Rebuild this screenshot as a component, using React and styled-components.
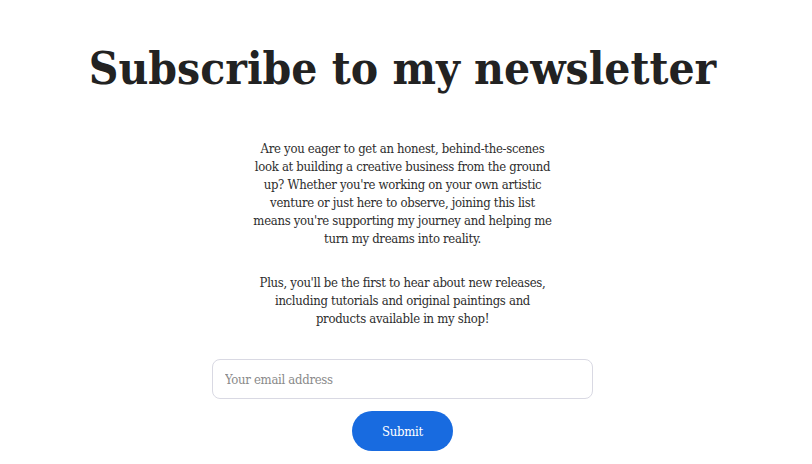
import styled, { createGlobalStyle } from "styled-components";

const GlobalStyle = createGlobalStyle`
  body {
    margin: 0;
    background: #ffffff;
    font-family: "DejaVu Serif", "Liberation Serif", serif;
    font-stretch: condensed;
    color: #2a2a2a;
  }
`;

const Page = styled.main`
  display: flex;
  flex-direction: column;
  align-items: center;
  padding: 36px 7px 0 0;
`;

const Title = styled.h1`
  margin: 0;
  font-size: 45.7px;
  line-height: 64px;
  font-weight: 700;
  color: #222222;
`;

const Copy = styled.div`
  margin-top: 40px;
  display: flex;
  flex-direction: column;
  gap: 26px;
`;

const Paragraph = styled.p`
  margin: 0;
  font-size: 13px;
  line-height: 18px;
  letter-spacing: -0.3px;
  text-align: center;
  color: #2e2e2e;
`;

const Form = styled.form`
  margin-top: 31px;
  display: flex;
  flex-direction: column;
  align-items: center;
  gap: 12px;
`;

const EmailInput = styled.input`
  box-sizing: border-box;
  width: 381px;
  height: 40px;
  padding: 0 12px;
  border: 1px solid #d9d9e3;
  border-radius: 8px;
  font-family: inherit;
  font-stretch: inherit;
  font-size: 13px;
  letter-spacing: -0.3px;
  color: #333;
  outline: none;

  &::placeholder {
    color: #8a8a8a;
  }
`;

const SubmitButton = styled.button`
  width: 101px;
  height: 40px;
  border: none;
  border-radius: 20px;
  background: #186be0;
  color: #ffffff;
  font-family: inherit;
  font-stretch: inherit;
  font-size: 13px;
  letter-spacing: -0.3px;
  cursor: pointer;
`;

export default function App() {
  return (
    <>
      <GlobalStyle />
      <Page>
        <Title>Subscribe to my newsletter</Title>
        <Copy>
          <Paragraph>
            Are you eager to get an honest, behind-the-scenes
            <br />
            look at building a creative business from the ground
            <br />
            up? Whether you're working on your own artistic
            <br />
            venture or just here to observe, joining this list
            <br />
            means you're supporting my journey and helping me
            <br />
            turn my dreams into reality.
          </Paragraph>
          <Paragraph>
            Plus, you'll be the first to hear about new releases,
            <br />
            including tutorials and original paintings and
            <br />
            products available in my shop!
          </Paragraph>
        </Copy>
        <Form onSubmit={(e) => e.preventDefault()}>
          <EmailInput type="email" placeholder="Your email address" />
          <SubmitButton type="submit">Submit</SubmitButton>
        </Form>
      </Page>
    </>
  );
}
